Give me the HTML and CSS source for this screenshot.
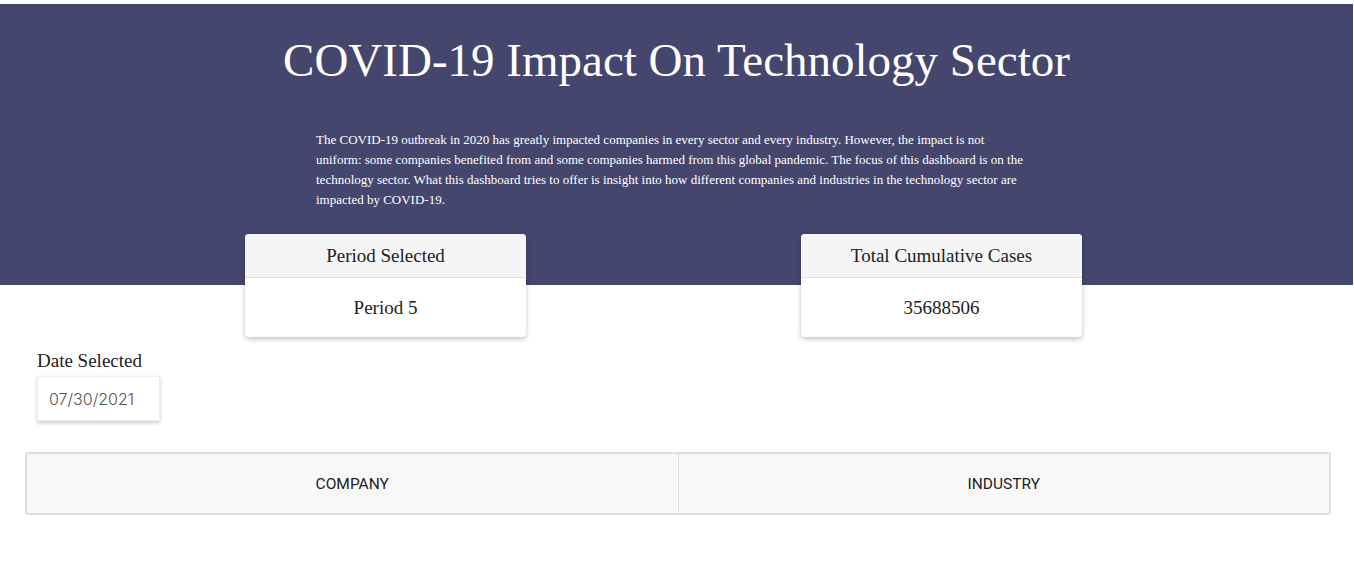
FILE: index.html
```html
<!DOCTYPE html>
<html>
<head>
<meta charset="utf-8">
<link rel="stylesheet" href="styles.css">
</head>
<body>
<header class="hero">
  <h1 class="hero-title">COVID-19 Impact On Technology Sector</h1>
  <p class="hero-text">The COVID-19 outbreak in 2020 has greatly impacted companies in every sector and every industry. However, the impact is not uniform: some companies benefited from and some companies harmed from this global pandemic. The focus of this dashboard is on the technology sector. What this dashboard tries to offer is insight into how different companies and industries in the technology sector are impacted by COVID-19.</p>
</header>
<section class="cards">
  <div class="card">
    <div class="card-head">Period Selected</div>
    <div class="card-body">Period 5</div>
  </div>
  <div class="card">
    <div class="card-head">Total Cumulative Cases</div>
    <div class="card-body">35688506</div>
  </div>
</section>
<section class="date">
  <div class="date-label">Date Selected</div>
  <div class="date-input">07/30/2021</div>
</section>
<section class="tabs">
  <div class="tab">COMPANY</div>
  <div class="tab">INDUSTRY</div>
</section>
</body>
</html>
```
FILE: styles.css
```css
html, body {
  margin: 0;
  padding: 0;
  background: #ffffff;
}
body {
  padding-top: 4px;
  font-family: "Liberation Serif", "Times New Roman", serif;
  color: #222;
}
.hero {
  background: #45466d;
  width: 1353px;
  height: 281px;
  box-sizing: border-box;
  padding-top: 28px;
  color: #ffffff;
}
.hero-title {
  margin: 0;
  text-align: center;
  font-weight: normal;
  font-size: 47px;
  line-height: 56px;
}
.hero-text {
  width: 714px;
  margin: 42px 0 0 316px;
  font-size: 13px;
  line-height: 20px;
}
.cards {
  display: flex;
  gap: 275px;
  margin-top: -51px;
  padding-left: 245px;
}
.card {
  width: 281px;
  background: #fff;
  border-radius: 4px;
  box-shadow: 0 2px 5px rgba(0,0,0,0.25);
  overflow: hidden;
  text-align: center;
  font-size: 19px;
}
.card-head {
  background: #f5f5f5;
  height: 43px;
  line-height: 44px;
  border-bottom: 1px solid #e2e2e2;
}
.card-body {
  height: 59px;
  line-height: 59px;
}
.date {
  padding: 12px 0 0 37px;
}
.date-label {
  font-size: 19px;
  line-height: 24px;
}
.date-input {
  margin-top: 3px;
  width: 123px;
  height: 45px;
  box-sizing: border-box;
  padding-left: 11px;
  line-height: 44px;
  font-family: "Inter", "Liberation Sans", sans-serif;
  font-weight: 300;
  font-size: 16px;
  color: #555;
  background: #fff;
  border: 1px solid #eee;
  box-shadow: 0 2px 4px rgba(0,0,0,0.2);
}
.tabs {
  display: flex;
  margin: 31px 23px 0 25px;
  height: 63px;
  box-sizing: border-box;
  background: #f8f8f8;
  border: 2px solid #dedede;
  border-radius: 3px;
}
.tab {
  flex: 1;
  display: flex;
  align-items: center;
  justify-content: center;
  font-family: "Roboto", "Liberation Sans", sans-serif;
  font-size: 15.5px;
  color: #222;
}
.tab + .tab {
  border-left: 1px solid #dedede;
}
```
